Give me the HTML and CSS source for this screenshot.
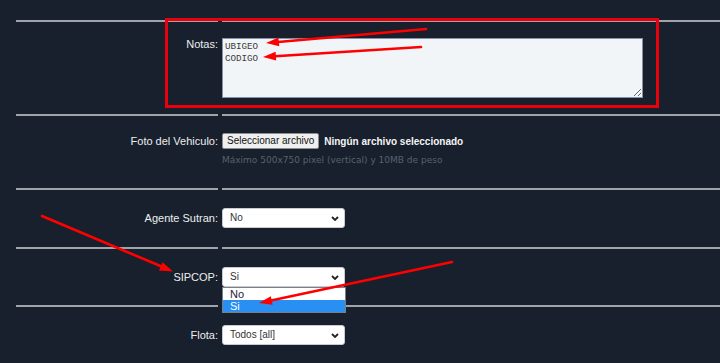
FILE: index.html
```html
<!DOCTYPE html>
<html lang="es">
<head>
  <meta charset="UTF-8">
  <title>Vehiculo</title>
  <link rel="stylesheet" href="styles.css">
</head>
<body>
  <div class="form">
    <div class="row row-notas">
      <div class="label label-top">Notas:</div>
      <div class="field">
        <textarea class="notes">UBIGEO
CODIGO</textarea>
      </div>
    </div>

    <div class="row row-foto">
      <div class="label">Foto del Vehiculo:</div>
      <div class="field">
        <div class="file-line">
          <span class="file-btn">Seleccionar archivo</span>
          <span class="file-name">Ningún archivo seleccionado</span>
        </div>
        <div class="hint">Máximo 500x750 pixel (vertical) y 10MB de peso</div>
      </div>
    </div>

    <div class="row row-select">
      <div class="label">Agente Sutran:</div>
      <div class="field">
        <div class="select">
          <span>No</span>
          <svg class="chev" width="8" height="5" viewBox="0 0 8 5"><path d="M1 1 L4 4 L7 1" fill="none" stroke="#222" stroke-width="1.8"/></svg>
        </div>
      </div>
    </div>

    <div class="row row-select">
      <div class="label">SIPCOP:</div>
      <div class="field">
        <div class="select">
          <span>Si</span>
          <svg class="chev" width="8" height="5" viewBox="0 0 8 5"><path d="M1 1 L4 4 L7 1" fill="none" stroke="#222" stroke-width="1.8"/></svg>
          <ul class="dropdown">
            <li>No</li>
            <li class="active">Si</li>
          </ul>
        </div>
      </div>
    </div>

    <div class="row row-select row-last">
      <div class="label">Flota:</div>
      <div class="field">
        <div class="select">
          <span>Todos [all]</span>
          <svg class="chev" width="8" height="5" viewBox="0 0 8 5"><path d="M1 1 L4 4 L7 1" fill="none" stroke="#222" stroke-width="1.8"/></svg>
        </div>
      </div>
    </div>
  </div>

  <div class="highlight"></div>

  <svg class="arrows" width="720" height="363" viewBox="0 0 720 363">
    <g stroke="#f00" stroke-width="2.6" stroke-linecap="round">
      <line x1="426" y1="29" x2="278" y2="42"/>
      <line x1="421" y1="47" x2="275" y2="56.3"/>
      <line x1="42" y1="216" x2="161" y2="266.3"/>
      <line x1="452" y1="262" x2="271" y2="300.6"/>
    </g>
    <g fill="#f00">
      <polygon points="266,43 278.4,37.6 279.3,46.3"/>
      <polygon points="263,57 275.6,51.8 276.2,60.6"/>
      <polygon points="173,271.5 159,270.4 162.6,262.2"/>
      <polygon points="259,303 270.8,296.2 272.7,304.8"/>
    </g>
  </svg>
</body>
</html>
```

FILE: styles.css
```css
* {
  box-sizing: border-box;
}

html, body {
  margin: 0;
  padding: 0;
}

body {
  background: #17202c;
  font-family: 'Liberation Sans', Arial, sans-serif;
  color: #e4e6e8;
  width: 720px;
  height: 363px;
  overflow: hidden;
  position: relative;
  padding-top: 20px;
}

.form {
  padding-left: 16px;
}

.row {
  display: grid;
  grid-template-columns: 202px 1fr;
  column-gap: 4px;
}

.row > .label,
.row > .field {
  border-top: 2px solid #9ea4aa;
  padding-top: 16px;
}

.row-notas {
  height: 94px;
}

.row-foto {
  height: 74px;
}

.row-foto > .label,
.row-foto > .field {
  padding-top: 17px;
}

.row-select {
  height: 59px;
}

.row-select + .row-select {
  height: 58px;
}

.row-select > .label,
.row-select > .field {
  padding-top: 18px;
}

.row-last {
  height: 60px;
}

.label {
  text-align: right;
  font-size: 11px;
  line-height: 20px;
  color: #eceef0;
}

.label-top {
  line-height: 13px;
}

.row-foto .label {
  line-height: 16px;
}

.notes {
  display: block;
  width: 421px;
  height: 60px;
  margin: 0;
  padding: 2px 2px;
  background: #f2f5f8;
  border: 1px solid #8a8fae;
  border-radius: 0;
  font-family: 'Liberation Mono', 'DejaVu Sans Mono', monospace;
  font-size: 9.2px;
  line-height: 12px;
  color: #3a3a3a;
  outline: none;
}

.file-line {
  display: flex;
  align-items: center;
  gap: 5px;
  height: 16px;
}

.file-btn {
  display: inline-block;
  height: 16px;
  padding: 0 4px;
  line-height: 14px;
  font-size: 10px;
  color: #111;
  background: #efefef;
  border: 1px solid #8d8d8d;
  border-radius: 2px;
}

.file-name {
  font-size: 10px;
  font-weight: 700;
  color: #f4f4f4;
}

.hint {
  margin-top: 6px;
  font-family: 'DejaVu Sans', Verdana, sans-serif;
  font-size: 9px;
  color: #58626e;
}

.select {
  position: relative;
  width: 123px;
  height: 20px;
  padding-left: 7px;
  background: #fff;
  border: 1px solid #c8cbd0;
  border-radius: 3px;
  font-size: 10px;
  line-height: 18px;
  color: #333;
}

.chev {
  position: absolute;
  right: 5px;
  top: 7px;
}

.dropdown {
  position: absolute;
  left: -1px;
  top: 19px;
  width: 124px;
  margin: 0;
  padding: 0;
  list-style: none;
  background: #fff;
  border: 1px solid #7a7f86;
  z-index: 2;
}

.dropdown li {
  height: 12px;
  padding-left: 7px;
  font-size: 11px;
  line-height: 12px;
  color: #1c2233;
}

.dropdown li.active {
  background: #2a8ff2;
  color: #fff;
}

.highlight {
  position: absolute;
  left: 165px;
  top: 18px;
  width: 494px;
  height: 90px;
  border: 3px solid #e8000b;
  z-index: 4;
}

.arrows {
  position: absolute;
  left: 0;
  top: 0;
  pointer-events: none;
  z-index: 5;
}
```
